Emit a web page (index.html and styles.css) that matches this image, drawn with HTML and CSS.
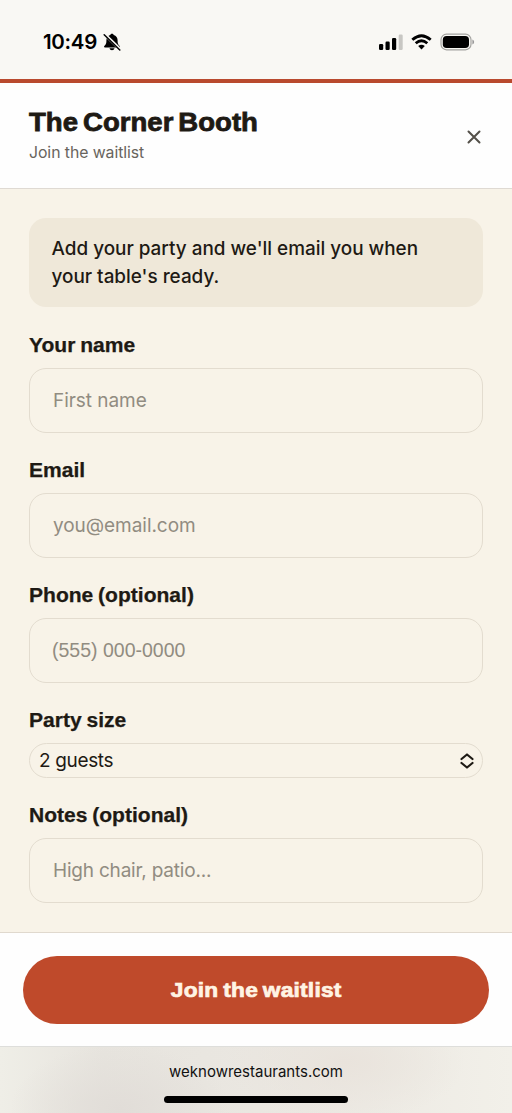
FILE: index.html
```html
<!DOCTYPE html>
<html lang="en">
<head>
<meta charset="utf-8">
<title>The Corner Booth</title>
<link rel="stylesheet" href="styles.css">
</head>
<body>
<div class="page">
  <div class="status">
    <div class="clock"><span>10:49</span>
      <svg width="18" height="18" viewBox="0 0 18 18">
        <path d="M9 .8c.8 0 1.500.5 1.700 1.200C13.200 2.800 14.600 4.800 14.600 7.300c0 3.500.6 4.200 2.100 5.700.5.600.2 1.400-.6 1.400H1.900c-.8 0-1.100-.8-.6-1.400C2.800 11.500 3.400 10.800 3.400 7.300c0-2.500 1.400-4.500 3.900-5.300C7.500 1.300 8.200.8 9 .8zM6.500 15.300h5c-.3 1.300-1.200 2-2.500 2s-2.200-.7-2.500-2z"/>
        <path class="slash-gap" d="M1.700 1.400 17.200 16.400"/>
        <path class="slash" d="M1.200 1.800 16.800 17"/>
      </svg>
    </div>
    <div class="signals">
      <svg width="24" height="16" viewBox="0 0 24 16"><rect x="0" y="10" width="4.200" height="6" rx="1.200"/><rect x="6.500" y="7.500" width="4.200" height="8.500" rx="1.200"/><rect x="13" y="4" width="4.200" height="12" rx="1.200"/><rect x="19.700" y="0.500" width="4" height="15.500" rx="1.200" fill="#c8c7c3"/></svg>
      <svg class="wifi" width="21" height="16" viewBox="0 0 21 16"><path d="M1.300 5.800Q10.500-2.400 19.700 5.800M4.700 9.300Q10.500 4.300 16.300 9.300"/><path class="dot" d="M7.200 12.100Q10.500 9.500 13.800 12.100L10.500 15.600Z"/></svg>
      <svg width="35" height="18" viewBox="0 0 35 18"><rect x="1" y="1.200" width="30" height="15.600" rx="5.500" fill="none" stroke="#a3a29f" stroke-width="1.200"/><rect x="2.800" y="3" width="26.200" height="12" rx="3.800"/><path d="M32.400 6.500c2.300.7 2.300 4.300 0 5z" fill="#999"/></svg>
    </div>
  </div>
  <header class="header">
    <div>
      <h1 class="title">The Corner Booth</h1>
      <p class="subtitle">Join the waitlist</p>
    </div>
    <button class="close" aria-label="Close"><svg width="14" height="14" viewBox="0 0 14 14"><path d="M1.500 1.500l11 11M12.500 1.500l-11 11"/></svg></button>
  </header>
  <main class="form">
    <p class="info">Add your party and we'll email you when<br>your table's ready.</p>
    <label class="field"><span class="label">Your name</span><input class="input" placeholder="First name"></label>
    <label class="field"><span class="label">Email</span><input class="input" placeholder="you@email.com"></label>
    <label class="field"><span class="label">Phone (optional)</span><input class="input phone" placeholder="(555) 000-0000"></label>
    <label class="field"><span class="label">Party size</span>
      <span class="select"><span>2 guests</span><svg width="14" height="16" viewBox="0 0 14 16"><path d="M1.500 6 7 1.500 12.500 6M1.500 10 7 14.500 12.500 10"/></svg></span></label>
    <label class="field"><span class="label">Notes (optional)</span><input class="input notes" placeholder="High chair, patio..."></label>
  </main>
  <footer class="footer"><button class="submit"><span class="submit-text">Join the waitlist</span></button></footer>
  <div class="browser"><span class="domain">weknowrestaurants.com</span><span class="home"></span></div>
</div>
</body>
</html>
```
FILE: styles.css
```css
* { box-sizing: border-box; }
body { margin: 0; font-family: "Liberation Sans", Arial, sans-serif; color: #1e1a14; }
.page { width: 512px; height: 1113px; display: flex; flex-direction: column; background: #fefefe; overflow: hidden; }
.status { height: 79px; flex: none; background: #f9f8f4; display: flex; justify-content: space-between; align-items: center; padding: 4px 37px 0 43px; }
.clock { display: flex; align-items: center; gap: 5.500px; font: 600 20.500px Inter, sans-serif; letter-spacing: -0.300px; color: #000; }
.clock svg { display: block; }
.slash-gap { stroke: #f9f8f4; stroke-width: 3; }
.slash { stroke: #000; stroke-width: 1.500; stroke-linecap: round; }
.signals { display: flex; align-items: center; gap: 8px; }
.signals svg { display: block; }
.wifi path { fill: none; stroke: #000; stroke-width: 2.800; }
.wifi .dot { fill: #000; stroke: none; }
.header { height: 110px; flex: none; border-top: 4px solid #b94a2e; border-bottom: 1px solid #dfdad3; display: flex; justify-content: space-between; align-items: center; padding: 0 31px 0 29px; }
.title { margin: 0; font-size: 26px; line-height: 31px; font-weight: 700; word-spacing: -2.500px; transform: scaleX(1.060); transform-origin: left; -webkit-text-stroke: 0.800px #1e1a14; }
.subtitle { margin: 3px 0 0; font: 400 15.800px/24px Inter, sans-serif; letter-spacing: -0.060px; color: #68645d; }
.close { border: 0; padding: 2px 0 0; background: none; display: flex; }
.close path { stroke: #545049; stroke-width: 2; stroke-linecap: round; }
.form { height: 743px; flex: none; background: #f8f3e8; padding: 29px 29px 0; display: flex; flex-direction: column; gap: 22px; }
.info { margin: 0 0 1px; height: 89px; flex: none; border-radius: 17px; background: #efe8d9; padding: 17px 22.500px; font: 500 18.900px/28px Inter, sans-serif; white-space: nowrap; }
.field { display: flex; flex-direction: column; gap: 8px; }
.label { padding-top: 1px; font-size: 20px; line-height: 29px; font-weight: 700; word-spacing: -1px; transform: scaleX(1.052); transform-origin: left; -webkit-text-stroke: 0.250px #1e1a14; }
.input { height: 65px; width: 100%; border: 1px solid #e3dccf; border-radius: 17px; background: transparent; padding: 0 23px; font: 400 19px Inter, sans-serif; letter-spacing: -0.050px; color: #1e1a14; outline: 0; }
.input::placeholder { color: #918c81; opacity: 1; }
.phone { font: 400 19.500px "Liberation Sans", Arial, sans-serif; letter-spacing: 0; padding-left: 22px; }
.notes { letter-spacing: -0.200px; }
.select { height: 35px; border: 1px solid #e3dccf; border-radius: 18px; display: flex; align-items: center; justify-content: space-between; padding: 0 8px 0 9px; font: 400 19px Inter, sans-serif; letter-spacing: -0.350px; }
.select path { fill: none; stroke: #1e1a14; stroke-width: 2.200; stroke-linecap: round; stroke-linejoin: round; }
.footer { height: 115px; flex: none; border-top: 1px solid #e0d9ce; border-bottom: 1px solid #dededb; padding: 23px 23px 0; }
.submit { display: block; width: 100%; height: 68px; border: 0; border-radius: 34px; background: #bf4a2b; color: #fff4e4; font: 700 20px "Liberation Sans", Arial, sans-serif; letter-spacing: 0.200px; word-spacing: -1.500px; -webkit-text-stroke: 0.700px #fff4e4; }
.submit-text { display: inline-block; transform: scaleX(1.135); }
.browser { flex: 1; display: flex; flex-direction: column; align-items: center; padding-top: 13px; gap: 12px; background: radial-gradient(ellipse 110px 65px at 120px 62px, #e1ddd8, transparent), radial-gradient(ellipse 120px 60px at 345px 15px, #e9e3dc, transparent), linear-gradient(90deg, #efeee7, #e7e4de 20%, #ebe8e2 60%, #f2f0e9); }
.domain { font: 400 15px/24px Inter, sans-serif; color: #111; }
.home { width: 184px; height: 7px; border-radius: 4px; background: #000; }
```
